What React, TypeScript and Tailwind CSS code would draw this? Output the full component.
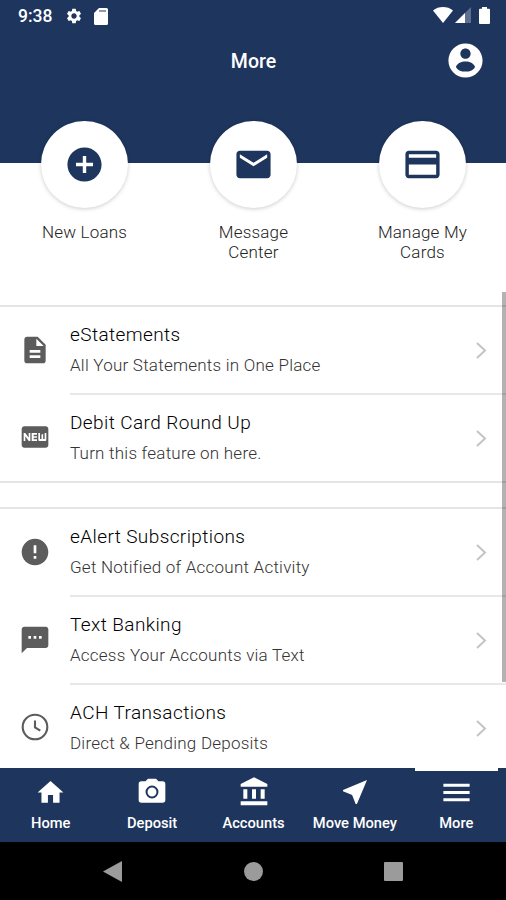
import type { ReactNode } from "react"
import type { IconType } from "react-icons"
import {
	MdAccountBalance,
	MdAddCircle,
	MdCreditCard,
	MdDescription,
	MdEmail,
	MdError,
	MdFiberNew,
	MdMenu,
	MdNearMe,
	MdSettings,
	MdSms,
} from "react-icons/md"

const shortcuts: { label: string; Icon: IconType }[] = [
	{ label: "New Loans", Icon: MdAddCircle },
	{ label: "Message Center", Icon: MdEmail },
	{ label: "Manage My Cards", Icon: MdCreditCard },
]

function StatusBar() {
	return (
		<div className="flex h-8 items-center justify-between pl-[18px] pr-[16px] text-white">
			<div className="flex items-center">
				<span className="w-[47px] text-[17.5px] leading-8 font-medium">9:38</span>
				<MdSettings className="size-[18px]" />
				<svg viewBox="0 0 14 17" className="ml-[11px] h-[17px] w-[14px]" fill="currentColor">
					<path d="M5 0h7.500A1.500 1.500 0 0 1 14 1.500v14a1.500 1.500 0 0 1-1.500 1.500h-11A1.500 1.500 0 0 1 0 15.500V5z" />
					<path d="M5 2h7v2H5z" fill="#8f9ab0" />
				</svg>
			</div>
			<div className="flex items-center pb-[2px]">
				<svg viewBox="0 0 20 16" className="h-4 w-5" fill="currentColor">
					<path d="M0 3.500C5.500-1.100 14.500-1.100 20 3.500L10 16z" />
				</svg>
				<svg viewBox="0 0 16 16" className="ml-[2px] h-4 w-4">
					<path d="M16 0v16H0z" fill="#5f708f" />
					<path d="M10 6v10H0z" fill="currentColor" />
				</svg>
				<svg viewBox="0 0 11 17" className="ml-[8px] h-[17px] w-[11px]" fill="currentColor">
					<path d="M3 0h5v1.700h2a1 1 0 0 1 1 1V16a1 1 0 0 1-1 1H1a1 1 0 0 1-1-1V2.700a1 1 0 0 1 1-1h2z" />
				</svg>
			</div>
		</div>
	)
}

function ClockIcon() {
	return (
		<svg viewBox="0 0 32 32" className="size-8" fill="none" stroke="currentColor" strokeWidth="2.100">
			<circle cx="16" cy="16" r="12.300" />
			<path d="M16 9.500v7l5.300 3.200" />
		</svg>
	)
}

function Shortcut({ label, Icon }: { label: string; Icon: IconType }) {
	return (
		<div className="flex flex-1 flex-col items-center">
			<div className="flex size-[87px] items-center justify-center rounded-full bg-white shadow-[0_1px_4px_rgba(0,0,0,0.2)]">
				<Icon className="size-[41px] text-[#1e355e]" />
			</div>
			<span className="mt-[14px] w-[100px] text-center text-[17px] leading-5 font-light tracking-[0.2px] text-[#222]">
				{label}
			</span>
		</div>
	)
}

function Row({ icon, title, text, last }: { icon: ReactNode; title: string; text: string; last?: boolean }) {
	return (
		<div className={`flex shrink-0 text-[#5c5c5c] ${last ? "h-[86px]" : "h-[88px]"}`}>
			<div className="flex w-[70px] items-center justify-center pb-[2px]">{icon}</div>
			<div className={`flex flex-1 items-center justify-between pr-[19px] ${last ? "" : "border-b-2 border-[#e8e8e8]"}`}>
				<div>
					<p className="text-[19px] leading-7 font-light tracking-[0.4px] text-black">{title}</p>
					<p className="mt-[2px] text-[17px] leading-7 font-light tracking-[0.23px] text-[#333]">{text}</p>
				</div>
				<svg viewBox="0 0 11 17" className="h-[17px] w-[11px]" fill="none" stroke="#c4c4c4" strokeWidth="2">
					<path d="M1 1l8 7.500L1 16" />
				</svg>
			</div>
		</div>
	)
}

function Tab({ label, children, active }: { label: string; children: ReactNode; active?: boolean }) {
	return (
		<div className="flex flex-1 flex-col items-center">
			<div className={`h-[3px] w-[83px] ${active ? "bg-white" : ""}`}></div>
			<div className="mt-[3px] flex h-9 items-center">{children}</div>
			<span className="text-[14.7px] leading-[26px] font-medium whitespace-nowrap">{label}</span>
		</div>
	)
}

function App() {
	return (
		<div className="flex h-[900px] w-[506px] flex-col overflow-hidden bg-white font-['Roboto',sans-serif]">
			{/* header */}
			<header className="h-[163px] shrink-0 bg-[#1e355e]">
				<StatusBar />
				<div className="grid h-[57px] grid-cols-3 items-center px-[20px] text-white">
					<h1 className="col-start-2 pt-[3px] pl-px text-center text-[19.5px] font-medium">More</h1>
					<svg viewBox="0 0 24 24" className="size-[41px] justify-self-end" fill="currentColor">
						<path d="M12 2C6.480 2 2 6.480 2 12s4.480 10 10 10 10-4.480 10-10S17.520 2 12 2zm0 3c1.660 0 3 1.340 3 3s-1.340 3-3 3-3-1.340-3-3 1.340-3 3-3zm0 13.500c-2.700 0-4.800-1-5.600-2.900.9-1.900 3-3 5.600-3s4.700 1.100 5.600 3c-.8 1.900-2.900 2.900-5.600 2.900z" />
					</svg>
				</div>
			</header>

			{/* shortcuts */}
			<div className="relative -mt-[42px] -mr-px flex h-[171px] shrink-0">
				{shortcuts.map((item) => (
					<Shortcut key={item.label} {...item} />
				))}
			</div>

			{/* menu list */}
			<main className="relative flex min-h-0 flex-1 flex-col pt-[13px]">
				<section className="shrink-0 border-y-2 border-[#e5e5e5]">
					<Row icon={<MdDescription className="size-8" />} title="eStatements" text="All Your Statements in One Place" />
					<Row icon={<MdFiberNew className="size-8" />} title="Debit Card Round Up" text="Turn this feature on here." last />
				</section>
				<section className="mt-6 shrink-0 border-t-2 border-[#e5e5e5]">
					<Row icon={<MdError className="size-8" />} title="eAlert Subscriptions" text="Get Notified of Account Activity" />
					<Row icon={<MdSms className="size-8" />} title="Text Banking" text="Access Your Accounts via Text" />
					<Row icon={<ClockIcon />} title="ACH Transactions" text="Direct & Pending Deposits" last />
				</section>
				{/* scrollbar */}
				<div className="absolute top-0 right-0 h-[390px] w-1 bg-black/30"></div>
			</main>

			{/* tabs */}
			<nav className="-mr-px flex h-[74px] shrink-0 bg-[#1e355e] text-white">
				<Tab label="Home">
					<svg viewBox="0 0 24 24" className="size-[31px]" fill="currentColor">
						<path d="M10 20v-6h4v6h5v-8h3L12 3 2 12h3v8z" />
					</svg>
				</Tab>
				<Tab label="Deposit">
					<svg viewBox="0 0 24 24" className="size-8" fill="currentColor">
						<path d="M9 2 7.170 4H4a2 2 0 0 0-2 2v12a2 2 0 0 0 2 2h16a2 2 0 0 0 2-2V6a2 2 0 0 0-2-2h-3.170L15 2z" />
						<circle cx="12" cy="12" r="4.100" fill="none" stroke="#1e355e" strokeWidth="1.500" />
					</svg>
				</Tab>
				<Tab label="Accounts">
					<MdAccountBalance className="size-8" />
				</Tab>
				<Tab label="Move Money">
					<MdNearMe className="size-8" />
				</Tab>
				<Tab label="More" active>
					<MdMenu className="size-[35px]" />
				</Tab>
			</nav>

			{/* system buttons */}
			<div className="flex h-[58px] shrink-0 items-center justify-between bg-black px-[103px]">
				<svg viewBox="0 0 19 21" className="h-[21px] w-[19px]" fill="#9b9b9b">
					<path d="M19 0v21L0 10.500z" />
				</svg>
				<div className="size-[19px] rounded-full bg-[#9b9b9b]"></div>
				<div className="size-[19px] rounded-[1px] bg-[#9b9b9b]"></div>
			</div>
		</div>
	)
}

export default App
